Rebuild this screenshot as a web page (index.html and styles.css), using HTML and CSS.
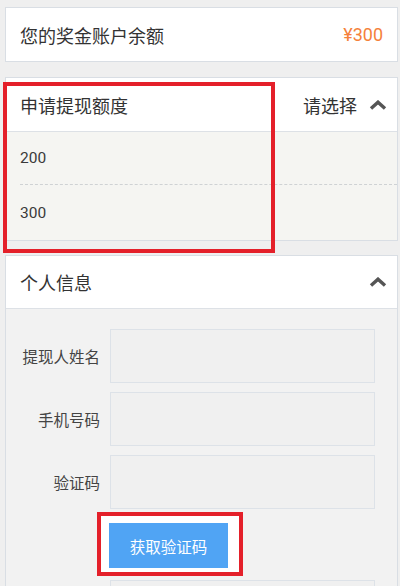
FILE: index.html
```html
<!DOCTYPE html>
<html lang="zh-CN">
<head>
<meta charset="utf-8">
<title>提现</title>
<link rel="stylesheet" href="styles.css">
</head>
<body>
<div class="page">
  <div class="card balance">
    <span>您的奖金账户余额</span>
    <span class="amount">¥300</span>
  </div>

  <div class="card select">
    <div class="head">
      <span>申请提现额度</span>
      <span class="head-right">请选择
        <svg class="chev" viewBox="0 0 18 10" width="18" height="10"><polyline points="2,8.6 9,2.2 16,8.6"/></svg>
      </span>
    </div>
    <ul class="options">
      <li class="opt">200</li>
      <li class="opt">300</li>
    </ul>
  </div>

  <div class="card info">
    <div class="head head-info">
      <span>个人信息</span>
      <svg class="chev" viewBox="0 0 18 10" width="18" height="10"><polyline points="2,8.6 9,2.2 16,8.6"/></svg>
    </div>
    <div class="form">
      <div class="row"><span class="label">提现人姓名</span><span class="input"></span></div>
      <div class="row"><span class="label">手机号码</span><span class="input"></span></div>
      <div class="row"><span class="label">验证码</span><span class="input"></span></div>
      <div class="btn-row"><span class="mark"><button class="btn" type="button">获取验证码</button></span></div>
      <div class="row row-last"><span class="label"></span><span class="input"></span></div>
    </div>
  </div>

  <div class="annot"></div>
</div>
</body>
</html>
```

FILE: styles.css
```css
* { box-sizing: border-box; }

html, body {
  margin: 0;
  padding: 0;
  background: #efefef;
}

body {
  font-family: Roboto, "Noto Sans CJK SC", sans-serif;
  color: #333;
}

.page {
  position: relative;
  padding: 7px 2px 0 5px;
}

.card {
  background: #fff;
  border: 1px solid #d9dee4;
}

.balance {
  height: 55px;
  display: flex;
  align-items: center;
  justify-content: space-between;
  padding: 0 14px;
  font-size: 18px;
}

.amount {
  color: #f5813b;
  font-size: 18px;
}

.select {
  margin-top: 15px;
}

.head {
  height: 54px;
  display: flex;
  align-items: center;
  justify-content: space-between;
  padding: 0 10px 0 14px;
  font-size: 18px;
  border-bottom: 1px solid #dde1e6;
}

.head-right {
  display: flex;
  align-items: center;
  gap: 12px;
}

.chev {
  display: block;
}

.chev polyline {
  fill: none;
  stroke: #555;
  stroke-width: 3.4;
}

.options {
  list-style: none;
  margin: 0;
  padding: 0;
  background: #f5f5f2;
}

.opt {
  margin-left: 14px;
  display: flex;
  align-items: center;
  font-size: 15.5px;
  color: #3a3a3a;
  padding-left: 0;
}

.opt:first-child {
  height: 53px;
  border-bottom: 1px dashed #cfd2d4;
}

.opt:last-child {
  height: 55px;
}

.info {
  margin-top: 14px;
}

.head-info {
  height: 53px;
}

.form {
  background: #f2f2f2;
  padding-top: 20px;
  padding-bottom: 40px;
}

.row {
  display: grid;
  grid-template-columns: 94px 265px;
  column-gap: 10px;
  align-items: center;
  height: 54px;
  margin-bottom: 9px;
}

.row-last {
  margin-top: 4px;
}

.label {
  text-align: right;
  font-size: 15.5px;
  color: #444;
}

.input {
  display: block;
  height: 54px;
  background: #f0f0f0;
  border: 1px solid #dde2e8;
}

.btn-row {
  margin-top: -6px;
  padding-left: 91px;
}

.mark {
  display: inline-block;
  vertical-align: top;
  background: #fff;
  border: 4px solid #e4202a;
  padding: 7px 11px 4px 8px;
}

.btn {
  display: block;
  width: 119px;
  height: 45px;
  border: 0;
  margin: 0;
  padding: 0;
  background: #50a4f4;
  color: #fff;
  font-family: Roboto, "Noto Sans CJK SC", sans-serif;
  font-size: 15.5px;
}

.annot {
  position: absolute;
  left: 3px;
  top: 82px;
  width: 272px;
  height: 171px;
  border: 4px solid #e4202a;
  pointer-events: none;
}
```
